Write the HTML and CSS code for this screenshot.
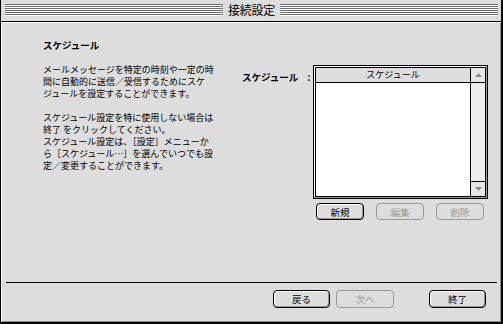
FILE: index.html
```
<!DOCTYPE html>
<html lang="ja">
<head>
<meta charset="utf-8">
<title>接続設定</title>
<link rel="stylesheet" href="styles.css">
</head>
<body>
<div class="window">
  <div class="titlebar">
    <div class="stripes"><span class="title">接続設定</span></div>
  </div>
  <div class="content">
    <div class="main">
      <div class="info">
        <div class="heading">スケジュール</div>
        <p class="para">メールメッセージを特定の時刻や一定の時<br>間に自動的に送信／受信するためにスケ<br>ジュールを設定することができます。</p>
        <p class="para">スケジュール設定を特に使用しない場合は<br>終了 をクリックしてください。<br>スケジュール設定は、［設定］メニューか<br>ら［スケジュール…］を選んでいつでも設<br>定／変更することができます。</p>
      </div>
      <div class="schedule">
        <div class="field-label">スケジュール<span class="colon">:</span></div>
        <div class="list-col">
          <div class="listbox">
            <div class="list-inner">
              <div class="list-main">
                <div class="list-header">スケジュール</div>
                <div class="list-body"></div>
              </div>
              <div class="scrollbar">
                <div class="arrow-cell top"><svg width="7" height="4" viewBox="0 0 7 4"><path d="M3.5 0 L7 4 L0 4 Z" fill="#8a8a8a"/></svg></div>
                <div class="track"></div>
                <div class="arrow-cell bottom"><svg width="7" height="4" viewBox="0 0 7 4"><path d="M0 0 L7 0 L3.5 4 Z" fill="#8a8a8a"/></svg></div>
              </div>
            </div>
          </div>
          <div class="list-buttons">
            <button class="btn small">新規</button>
            <button class="btn small disabled">編集</button>
            <button class="btn small disabled">削除</button>
          </div>
        </div>
      </div>
    </div>
    <div class="separator"></div>
    <div class="footer">
      <button class="btn wide">戻る</button>
      <button class="btn wide next disabled">次へ</button>
      <button class="btn wide finish">終了</button>
    </div>
  </div>
</div>
</body>
</html>
```
FILE: styles.css
```
* { box-sizing: border-box; }
html, body { margin: 0; padding: 0; background: #dddddd; }
body {
  font-family: "Noto Sans CJK JP", "Noto Sans", sans-serif;
  color: #000;
}
.window {
  width: 503px;
  height: 324px;
  border-left: 1px solid #000;
  border-right: 2px solid #000;
  border-bottom: 2px solid #000;
  background: #dddddd;
  display: flex;
  flex-direction: column;
}
.titlebar {
  height: 22px;
  border-bottom: 1px solid #000;
  background: #dddddd;
  padding: 4px 3px 0 4px;
}
.stripes {
  height: 12px;
  background: repeating-linear-gradient(to bottom, #6e6e6e 0 1px, #ffffff 1px 2px);
  display: flex;
  justify-content: center;
  align-items: center;
}
.title {
  background: #dddddd;
  font-size: 12px;
  line-height: 16px;
  height: 16px;
  padding: 0 5px;
  letter-spacing: -0.3px;
}
.content {
  flex: 1;
  display: flex;
  flex-direction: column;
  box-shadow: inset 1px 1px 0 #ffffff, inset -1px -1px 0 #8c8c8c;
}
.main {
  height: 260px;
  display: flex;
  align-items: flex-start;
  padding: 17px 0 0 42px;
}
.info {
  width: 199px;
  font-size: 9px;
  line-height: 12px;
}
.heading {
  font-weight: bold;
  font-size: 9.5px;
  line-height: 12px;
  margin-bottom: 13px;
}
.para {
  margin: 0 0 12px 0;
  white-space: nowrap;
}
.schedule {
  display: flex;
  margin-top: 26px;
}
.field-label {
  width: 71px;
  padding-top: 6px;
  font-size: 9.5px;
  line-height: 12px;
  font-weight: bold;
  white-space: nowrap;
}
.colon { margin-left: 9px; }
.listbox {
  width: 175px;
  height: 134px;
  border: 1px solid #000;
  padding: 1px;
  background: #ffffff;
  box-shadow: inset -1px -1px 0 #999;
}
.list-inner {
  height: 100%;
  border: 1px solid #000;
  display: flex;
  background: #fff;
}
.list-main {
  flex: 1;
  display: flex;
  flex-direction: column;
}
.list-header {
  height: 15px;
  background: #dddddd;
  border-bottom: 1px solid #000;
  text-align: center;
  font-size: 9px;
  line-height: 14px;
}
.list-body { flex: 1; background: #fff; }
.scrollbar {
  width: 15px;
  border-left: 1px solid #000;
  background: #e6e6e6;
  display: flex;
  flex-direction: column;
}
.arrow-cell {
  height: 15px;
  display: flex;
  align-items: center;
  justify-content: center;
  background: #e6e6e6;
}
.arrow-cell.top { border-bottom: 1px solid #000; }
.arrow-cell.bottom { border-top: 1px solid #000; }
.track { flex: 1; background: #eeeeee; }
.list-buttons {
  display: flex;
  gap: 12px;
  padding-left: 3px;
  margin-top: 4px;
}
.btn {
  font-family: "Noto Sans CJK JP", "Noto Sans", sans-serif;
  font-size: 9.5px;
  line-height: 14px;
  color: #000;
  background: #dddddd;
  border: 1px solid #000;
  border-radius: 4px;
  box-shadow: inset 1px 1px 0 #ffffff, inset -1px -1px 0 #999999;
  padding: 0;
  margin: 0;
}
.btn.small { width: 48px; height: 17px; }
.btn.wide { width: 57px; height: 18px; }
.btn.next { width: 58px; }
.btn.disabled {
  color: #9a9a9a;
  border-color: #9a9a9a;
  box-shadow: none;
}
.separator {
  height: 1px;
  background: #000;
  margin: 0 4px 0 5px;
}
.footer {
  display: flex;
  justify-content: flex-end;
  gap: 6px;
  padding: 7px 15px 0 0;
}
.btn.finish { margin-left: 29px; }
```
